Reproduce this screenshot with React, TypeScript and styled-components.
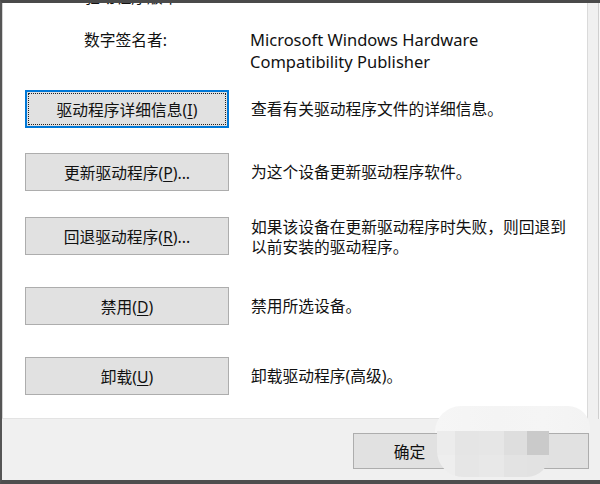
import React from 'react';
import styled, { createGlobalStyle } from 'styled-components';

const Global = createGlobalStyle`
  html, body { margin: 0; padding: 0; background: #ffffff; }
  body {
    font-family: "Noto Sans", "Noto Sans CJK SC", sans-serif;
    color: #000;
    -webkit-font-smoothing: antialiased;
  }
`;

const Frame = styled.div`
  position: relative;
  width: 600px;
  height: 484px;
  box-sizing: border-box;
  display: flex;
  flex-direction: column;
  background: #f0f0f0;
  border-top: 3px solid #4a4a4a;
  border-left: 2px solid #555555;
  border-bottom: 4px solid #4e4e4e;
  overflow: hidden;
`;

const Main = styled.div`
  display: flex;
  height: 416px;
  flex: none;
`;

const Panel = styled.div`
  flex: 1;
  box-sizing: border-box;
  background: #ffffff;
  border-left: 1px solid #d4d4d4;
  border-right: 1px solid #dadada;
  border-bottom: 1px solid #e3e3e3;
  overflow: hidden;
  padding-left: 22px;
  display: flex;
  flex-direction: column;
`;

const RightStrip = styled.div`
  width: 12px;
  flex: none;
  background: #f0f0f0;
  box-shadow: inset -1px 0 0 #f7f7f7, inset -2px 0 0 #cfcfcf;
`;

const InfoRow = styled.div<{ $top: number }>`
  display: grid;
  grid-template-columns: 166px 1fr;
  padding-left: 59px;
  margin-top: ${(p) => p.$top}px;
  font-size: 15.75px;
  line-height: 22px;
  color: #111;
`;

const InfoLabel = styled.div``;

const InfoValue = styled.div`
  font-size: 16.5px;
`;

const ActionRow = styled.div<{ $top: number }>`
  display: flex;
  align-items: flex-start;
  margin-top: ${(p) => p.$top}px;
`;

const ActionButton = styled.div<{ $focused?: boolean }>`
  position: relative;
  width: 204px;
  height: 38px;
  flex: none;
  box-sizing: border-box;
  display: flex;
  align-items: center;
  justify-content: center;
  background: #e1e1e1;
  border: ${(p) => (p.$focused ? '2px solid #0078d7' : '1px solid #adadad')};
  font-size: 15.75px;
  color: #111;
  ${(p) =>
    p.$focused
      ? `&::after {
    content: '';
    position: absolute;
    inset: 1px;
    border: 1px dotted #222;
  }`
      : ''}
  u {
    text-decoration: underline;
    text-underline-offset: 2px;
  }
`;

const Desc = styled.div<{ $multi?: boolean }>`
  margin-left: 22px;
  padding-top: ${(p) => (p.$multi ? 0 : 9)}px;
  font-size: 15.75px;
  line-height: 20px;
  color: #111;
`;

const Footer = styled.div`
  flex: 1;
  display: flex;
  justify-content: flex-end;
  align-items: flex-start;
  gap: 10px;
  padding: 14px 11px 0 0;
`;

const DialogButton = styled.div`
  width: 113px;
  height: 36px;
  box-sizing: border-box;
  display: flex;
  align-items: center;
  justify-content: center;
  background: #e1e1e1;
  border: 1px solid #adadad;
  font-size: 15.75px;
  color: #111;
`;

const Blob = styled.div`
  position: absolute;
  left: 433px;
  top: 400px;
  width: 156px;
  height: 73px;
  pointer-events: none;
`;

const BlobTop = styled.div`
  position: absolute;
  left: 0;
  top: 3px;
  width: 155px;
  height: 27px;
  border-radius: 26px 22px 0 0;
  background: linear-gradient(90deg, #f6f6f6 0%, #f4f4f4 40%, #f5f5f5 70%, #f3f3f3 100%);
`;

const BlobBottom = styled.div`
  position: absolute;
  left: 2px;
  top: 28px;
  width: 112px;
  height: 46px;
  border-radius: 0 0 22px 26px;
  overflow: hidden;
  display: grid;
  grid-template-columns: 18px 24px 25px 23px 22px;
  grid-template-rows: 24px 22px;
`;

const Tile = styled.div<{ $c: string }>`
  background: ${(p) => p.$c};
`;

const tiles = [
  '#ececec', '#e5e5e5', '#e6e6e6', '#dedede', '#cacaca',
  '#eeeeee', '#e6e6e6', '#e8e8e8', '#e3e3e3', '#e2e2e2',
];

const actions = [
  { top: 17, label: '驱动程序详细信息', key: 'I', suffix: '', desc: ['查看有关驱动程序文件的详细信息。'], focused: true },
  { top: 25, label: '更新驱动程序', key: 'P', suffix: '...', desc: ['为这个设备更新驱动程序软件。'] },
  { top: 26, label: '回退驱动程序', key: 'R', suffix: '...', desc: ['如果该设备在更新驱动程序时失败，则回退到', '以前安装的驱动程序。'] },
  { top: 30, label: '禁用', key: 'D', suffix: '', desc: ['禁用所选设备。'] },
  { top: 32, label: '卸载', key: 'U', suffix: '', desc: ['卸载驱动程序(高级)。'] },
];

export default function App() {
  return (
    <>
      <Global />
      <Frame>
        <Main>
          <Panel>
            <InfoRow $top={-17}>
              <InfoLabel>驱动程序版本:</InfoLabel>
              <InfoValue>10.0.18362.1</InfoValue>
            </InfoRow>
            <InfoRow $top={21}>
              <InfoLabel>数字签名者:</InfoLabel>
              <InfoValue>
                Microsoft Windows Hardware
                <br />
                Compatibility Publisher
              </InfoValue>
            </InfoRow>
            {actions.map((a) => (
              <ActionRow key={a.key} $top={a.top}>
                <ActionButton $focused={a.focused}>
                  <span>
                    {a.label}(<u>{a.key}</u>){a.suffix}
                  </span>
                </ActionButton>
                <Desc $multi={a.desc.length > 1}>
                  {a.desc.map((d, i) => (
                    <div key={i}>{d}</div>
                  ))}
                </Desc>
              </ActionRow>
            ))}
          </Panel>
          <RightStrip />
        </Main>
        <Footer>
          <DialogButton>确定</DialogButton>
          <DialogButton>取消</DialogButton>
        </Footer>
        <Blob>
          <BlobTop />
          <BlobBottom>
            {tiles.map((c, i) => (
              <Tile key={i} $c={c} />
            ))}
          </BlobBottom>
        </Blob>
      </Frame>
    </>
  );
}
